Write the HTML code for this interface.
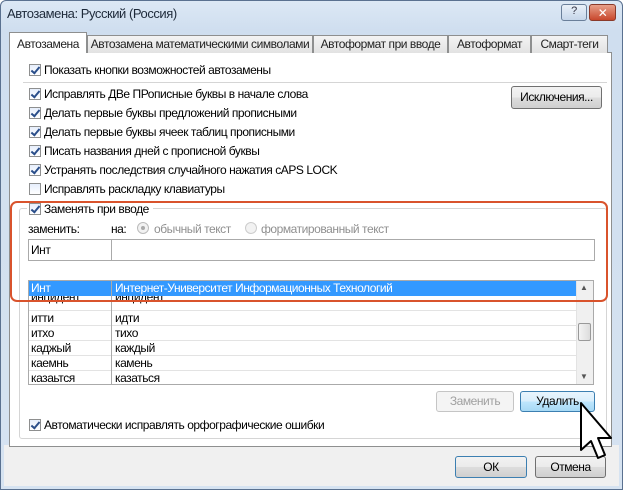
<!DOCTYPE html><html><head><meta charset="utf-8"><style>
*{box-sizing:border-box;margin:0;padding:0}
body{width:623px;height:490px;overflow:hidden;font-family:"Liberation Sans","DejaVu Sans",sans-serif;font-size:12px;letter-spacing:-0.45px;color:#000;background:#fff;position:relative}
.a{position:absolute;white-space:nowrap}
.win{position:absolute;left:0;top:0;width:623px;height:490px;background:linear-gradient(#dce8f5,#cfdeef 30px,#d6e3f1);border:1px solid #5a7190;border-radius:6px 6px 0 0}
.tab{position:absolute;top:35px;height:18px;border:1px solid #8e8f8f;border-bottom:none;background:linear-gradient(#f4f4f4,#e2e2e2);font-size:12px;text-align:center;line-height:16px;color:#222;white-space:nowrap;overflow:hidden}
.cb{position:absolute;width:12px;height:12px;border:1px solid #8e8f8f;background:linear-gradient(#e6eefc,#fff)}
.cb.c::after{content:"";position:absolute;left:3px;top:0px;width:3px;height:7px;border:solid #2a4e8a;border-width:0 2px 2px 0;transform:rotate(40deg)}
.btn{position:absolute;border:1px solid #707070;border-radius:3px;background:linear-gradient(#f2f2f2,#ebebeb 50%,#dddddd 51%,#cfcfcf);text-align:center;font-size:12px}
.row{position:absolute;left:29px;width:547px;height:15px;border-bottom:1px solid #e3e3e3;font-size:12px;line-height:14px;overflow:hidden}
.row span{position:absolute}
</style></head><body>
<div class="win"></div>
<div class="a" style="left:7px;top:6px;font-size:13px;color:#1e2a3a">Автозамена: Русский (Россия)</div>
<div class="a" style="left:561px;top:4px;width:26px;height:17px;border:1px solid #6a7f9a;border-radius:3px;background:linear-gradient(#e9f0f8,#c6d6ea);text-align:center;font-size:11px;color:#334">?</div>
<div class="a" style="left:589px;top:4px;width:27px;height:17px;border:1px solid #8a3a2a;border-radius:3px;background:linear-gradient(#e8a08a,#c8472c);color:#fff;text-align:center;font-weight:bold;font-size:12px;line-height:16px">✕</div>
<div class="a" style="left:4px;top:445px;width:615px;height:41px;background:#f0f0f0"></div>
<div class="a" style="left:9px;top:52px;width:603px;height:395px;background:#fff;border:1px solid #8e8f8f"></div>
<div class="tab" style="left:9px;top:32px;height:21px;width:78px;background:#fff;line-height:22px">Автозамена</div>
<div class="tab" style="left:87px;width:226px">Автозамена математическими символами</div>
<div class="tab" style="left:313px;width:135px">Автоформат при вводе</div>
<div class="tab" style="left:448px;width:83px">Автоформат</div>
<div class="tab" style="left:531px;width:77px">Смарт-теги</div>
<div class="cb c" style="left:29px;top:64px"></div><div class="a" style="left:44px;top:63px">Показать кнопки возможностей автозамены</div>
<div class="a" style="left:23px;top:82px;width:584px;height:1px;background:#d5d5d5"></div>
<div class="cb c" style="left:29px;top:88px"></div><div class="a" style="left:44px;top:87px">Исправлять ДВе ПРописные буквы в начале слова</div>
<div class="cb c" style="left:29px;top:107px"></div><div class="a" style="left:44px;top:106px">Делать первые буквы предложений прописными</div>
<div class="cb c" style="left:29px;top:126px"></div><div class="a" style="left:44px;top:125px">Делать первые буквы ячеек таблиц прописными</div>
<div class="cb c" style="left:29px;top:145px"></div><div class="a" style="left:44px;top:144px">Писать названия дней с прописной буквы</div>
<div class="cb c" style="left:29px;top:164px"></div><div class="a" style="left:44px;top:163px">Устранять последствия случайного нажатия cAPS LOCK</div>
<div class="cb" style="left:29px;top:183px"></div><div class="a" style="left:44px;top:182px">Исправлять раскладку клавиатуры</div>
<div class="btn" style="left:511px;top:86px;width:91px;height:23px;line-height:21px">Исключения...</div>
<div class="a" style="left:19px;top:208px;width:588px;height:231px;border:1px solid #d5d5d5;border-radius:3px"></div>
<div class="a" style="left:27px;top:200px;width:126px;height:16px;background:#fff"></div>
<div class="cb c" style="left:29px;top:203px"></div><div class="a" style="left:44px;top:202px">Заменять при вводе</div>
<div class="a" style="left:28px;top:222px">заменить:</div>
<div class="a" style="left:111px;top:222px">на:</div>
<div class="a" style="left:137px;top:222px;width:12px;height:12px;border:1px solid #bbb;border-radius:50%;background:#f2f2f2"><div style="margin:3px;width:4px;height:4px;border-radius:50%;background:#aaa"></div></div>
<div class="a" style="left:154px;top:222px;color:#8f8f8f">обычный текст</div>
<div class="a" style="left:245px;top:222px;width:12px;height:12px;border:1px solid #ccc;border-radius:50%;background:#f2f2f2"></div>
<div class="a" style="left:261px;top:222px;color:#8f8f8f">форматированный текст</div>
<div class="a" style="left:28px;top:239px;width:567px;height:22px;border:1px solid #aaa;background:#fff"></div>
<div class="a" style="left:111px;top:240px;width:1px;height:20px;background:#aaa"></div>
<div class="a" style="left:31px;top:243px">Инт</div>
<div class="a" style="left:28px;top:280px;width:566px;height:105px;border:1px solid #aaa;background:#fff"></div>
<div class="a" style="left:29px;top:281px;width:547px;height:15px;background:#3399ff"></div>
<div class="row" style="top:281px;color:#fff;border:none"><span style="left:2px">Инт</span><span style="left:86px">Интернет-Университет Информационных Технологий</span></div>
<div class="row" style="top:296px"><span style="left:2px;top:-6px">инцидент</span><span style="left:86px;top:-6px">инцидент</span></div>
<div class="row" style="top:311px"><span style="left:2px">итти</span><span style="left:86px">идти</span></div>
<div class="row" style="top:326px"><span style="left:2px">итхо</span><span style="left:86px">тихо</span></div>
<div class="row" style="top:341px"><span style="left:2px">каджый</span><span style="left:86px">каждый</span></div>
<div class="row" style="top:356px"><span style="left:2px">каемнь</span><span style="left:86px">камень</span></div>
<div class="row" style="top:371px;border:none"><span style="left:2px">казаьтся</span><span style="left:86px">казаться</span></div>
<div class="a" style="left:111px;top:281px;width:1px;height:103px;background:#aaa"></div>
<div class="a" style="left:576px;top:281px;width:17px;height:103px;background:#f0f0f0;border-left:1px solid #e3e3e3"></div>
<div class="a" style="left:578px;top:323px;width:13px;height:18px;border:1px solid #999;border-radius:2px;background:linear-gradient(90deg,#f4f4f4,#dcdcdc)"></div>
<div class="a" style="left:580px;top:283px;font-size:8px;color:#555">▲</div>
<div class="a" style="left:580px;top:372px;font-size:8px;color:#555">▼</div>
<div class="a" style="left:10px;top:201px;width:598px;height:101px;border:2px solid #d9532c;border-radius:7px"></div>
<div class="btn" style="left:436px;top:391px;width:78px;height:21px;line-height:19px;color:#a0a0a0;border-color:#c5c5c5;background:#f4f4f4">Заменить</div>
<div class="btn" style="left:520px;top:391px;width:75px;height:21px;line-height:19px;border-color:#3c7fb1;background:linear-gradient(#e9f5fd,#d9eefc 50%,#bee6fd 51%,#a7d9f5)">Удалить</div>
<div class="cb c" style="left:29px;top:419px"></div><div class="a" style="left:44px;top:418px">Автоматически исправлять орфографические ошибки</div>
<div class="btn" style="left:455px;top:456px;width:72px;height:22px;line-height:20px;border-color:#3c7fb1">ОК</div>
<div class="btn" style="left:535px;top:456px;width:71px;height:22px;line-height:20px">Отмена</div>
<svg class="a" style="left:575px;top:400px" width="40" height="65" viewBox="0 0 40 65"><path d="M6 3 L6 50 L16 41 L23 58 L30 55 L23 38 L36 38 Z" fill="#fff" stroke="#000" stroke-width="2" stroke-linejoin="round"/></svg>
</body></html>
